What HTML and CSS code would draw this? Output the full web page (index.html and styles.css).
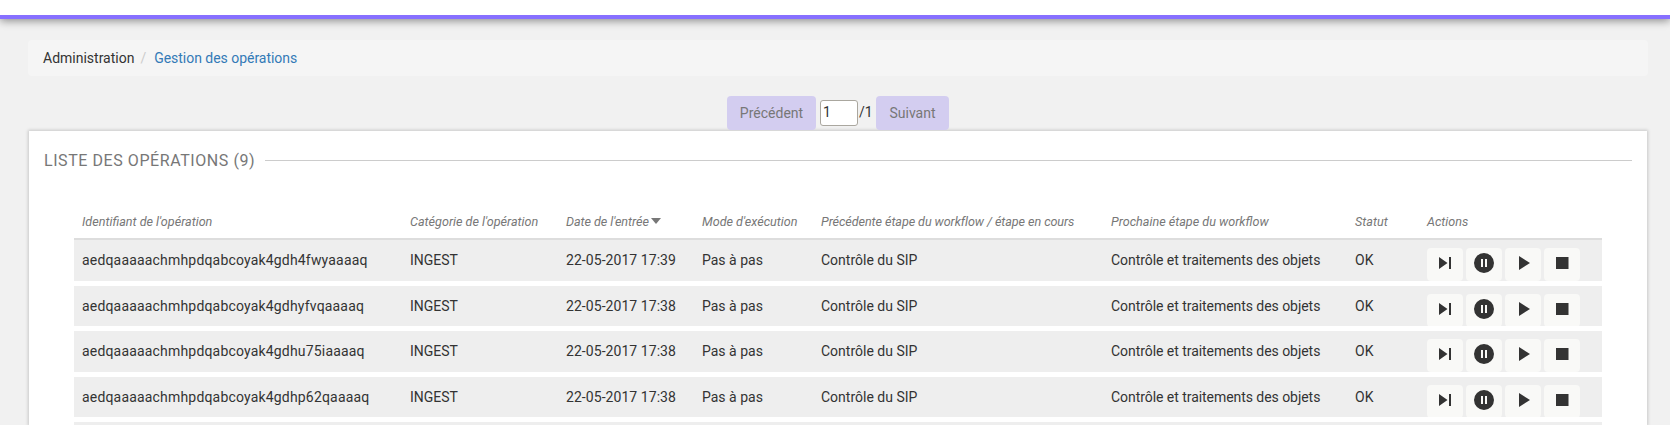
FILE: index.html
```html
<!DOCTYPE html>
<html lang="fr">
<head>
<meta charset="utf-8">
<title>Gestion des opérations</title>
<link rel="stylesheet" href="styles.css">
</head>
<body>
<svg class="sprite" width="0" height="0">
  <symbol id="next" viewBox="0 0 36 33"><path d="M12 9l8.5 6-8.5 6zM22 9h2v12h-2z"/></symbol>
  <symbol id="pause" viewBox="0 0 36 33"><path fill-rule="evenodd" d="M18 5a10 10 0 1 0 0 20 10 10 0 0 0 0-20zM15 11h2v8h-2zM19 11h2v8h-2z"/></symbol>
  <symbol id="play" viewBox="0 0 36 33"><path d="M14 8l11 7-11 7z"/></symbol>
  <symbol id="stop" viewBox="0 0 36 33"><path d="M12 9h12.5v12H12z"/></symbol>
</svg>
<header class="topbar"></header>
<main class="page">
  <nav class="breadcrumb"><span>Administration</span><span class="separator">/</span><a class="current">Gestion des opérations</a></nav>
  <div class="pager">
    <button class="pager-button previous" disabled>Précédent</button>
    <input class="pager-input" type="text" value="1">
    <span class="pager-total">/1</span>
    <button class="pager-button following" disabled>Suivant</button>
  </div>
  <section class="card">
    <h1 class="card-title"><span>LISTE DES OPÉRATIONS (9)</span></h1>
    <div class="table">
      <div class="row head">
        <span>Identifiant de l'opération</span><span>Catégorie de l'opération</span><span class="sorted">Date de l'entrée<i class="caret"></i></span><span>Mode d'exécution</span><span class="step">Précédente étape du workflow / étape en cours</span><span>Prochaine étape du workflow</span><span>Statut</span><span>Actions</span>
      </div>
      <div class="row item">
        <span class="guid">aedqaaaaachmhpdqabcoyak4gdh4fwyaaaaq</span><span>INGEST</span><span class="date">22-05-2017 17:39</span><span>Pas à pas</span><span>Contrôle du SIP</span><span class="task">Contrôle et traitements des objets</span><span>OK</span>
        <div class="actions"><svg class="action"><use href="#next"/></svg><svg class="action"><use href="#pause"/></svg><svg class="action"><use href="#play"/></svg><svg class="action"><use href="#stop"/></svg></div>
      </div>
      <div class="row item">
        <span class="guid">aedqaaaaachmhpdqabcoyak4gdhyfvqaaaaq</span><span>INGEST</span><span class="date">22-05-2017 17:38</span><span>Pas à pas</span><span>Contrôle du SIP</span><span class="task">Contrôle et traitements des objets</span><span>OK</span>
        <div class="actions"><svg class="action"><use href="#next"/></svg><svg class="action"><use href="#pause"/></svg><svg class="action"><use href="#play"/></svg><svg class="action"><use href="#stop"/></svg></div>
      </div>
      <div class="row item">
        <span class="guid">aedqaaaaachmhpdqabcoyak4gdhu75iaaaaq</span><span>INGEST</span><span class="date">22-05-2017 17:38</span><span>Pas à pas</span><span>Contrôle du SIP</span><span class="task">Contrôle et traitements des objets</span><span>OK</span>
        <div class="actions"><svg class="action"><use href="#next"/></svg><svg class="action"><use href="#pause"/></svg><svg class="action"><use href="#play"/></svg><svg class="action"><use href="#stop"/></svg></div>
      </div>
      <div class="row item">
        <span class="guid">aedqaaaaachmhpdqabcoyak4gdhp62qaaaaq</span><span>INGEST</span><span class="date">22-05-2017 17:38</span><span>Pas à pas</span><span>Contrôle du SIP</span><span class="task">Contrôle et traitements des objets</span><span>OK</span>
        <div class="actions"><svg class="action"><use href="#next"/></svg><svg class="action"><use href="#pause"/></svg><svg class="action"><use href="#play"/></svg><svg class="action"><use href="#stop"/></svg></div>
      </div>
      <div class="row item last"></div>
    </div>
  </section>
</main>
</body>
</html>
```
FILE: styles.css
```css
* { box-sizing: border-box; }
body {
  margin: 0;
  height: 425px;
  overflow: hidden;
  background: #f1f1f1;
  color: #333;
  font: 14px/20px Roboto, sans-serif;
}
.sprite { display: block; }
.topbar {
  height: 19px;
  background: #fff;
  border-bottom: 4px solid #8770ff;
  box-shadow: 0 2px 8px rgba(0, 0, 0, .42);
}
.page { padding: 21px 22px 0 28px; }
.breadcrumb {
  display: flex;
  height: 36px;
  padding: 8px 15px;
  border-radius: 4px;
  background: #f5f5f5;
}
.separator { padding: 0 8px 0 6px; color: #ccc; }
.current { color: #337ab7; letter-spacing: -.03px; }
.pager {
  display: flex;
  height: 34px;
  margin: 20px 0 0 699px;
}
.pager-button {
  height: 34px;
  padding: 0;
  border: 0;
  border-radius: 4px;
  background: #d3cdf0;
  color: #777;
  font: inherit;
}
.previous { width: 89px; }
.following { width: 73px; }
.pager-input {
  width: 38px;
  height: 26px;
  margin: 4px 1px 0 4px;
  padding: 0 2px 3px;
  border: 1px solid #aaa79f;
  border-radius: 3px;
  background: #fff;
  color: #333;
  font: inherit;
}
.pager-total { width: 17px; padding-top: 6px; }
.card {
  height: 294px;
  margin: 1px 1px 0;
  padding: 19px 15px 0;
  background: #fff;
  box-shadow: 0 0 3px 1px rgba(0, 0, 0, .17);
}
.card-title {
  display: flex;
  align-items: center;
  gap: 9.5px;
  margin: 0;
  color: #777;
  font-size: 16px;
  font-weight: 400;
  line-height: 21px;
  letter-spacing: .57px;
}
.card-title::after { content: ""; flex: 1; height: 1px; background: #ccc; }
.table { margin: 35px 30px 0; }
.row {
  display: grid;
  grid-template-columns: 328px 156px 136px 119px 290px 244px 72px 1fr;
  padding-left: 8px;
  white-space: nowrap;
}
.head {
  height: 34px;
  padding-top: 6px;
  border-bottom: 2px solid #ddd;
  color: #777;
  font-size: 12.6px;
  font-style: italic;
}
.step { letter-spacing: -.07px; }
.sorted { letter-spacing: -.05px; }
.item {
  height: 40.6px;
  padding-top: 10.2px;
  background: #eee;
}
.item + .item { margin-top: 5px; }
.last { height: 3px; padding: 0; }
.guid { letter-spacing: .18px; }
.date { letter-spacing: .06px; }
.task { letter-spacing: -.05px; }
.caret {
  display: inline-block;
  margin-left: 2px;
  border: 5.5px solid transparent;
  border-width: 6px 5.5px 0;
  border-top-color: #777;
  vertical-align: 2px;
}
.actions { display: flex; gap: 3px; height: 32.6px; margin-top: -2.2px; overflow: hidden; }
.action {
  width: 36px;
  height: 33px;
  border-radius: 4px;
  background: #f9f9f7;
  fill: #333;
}
```
